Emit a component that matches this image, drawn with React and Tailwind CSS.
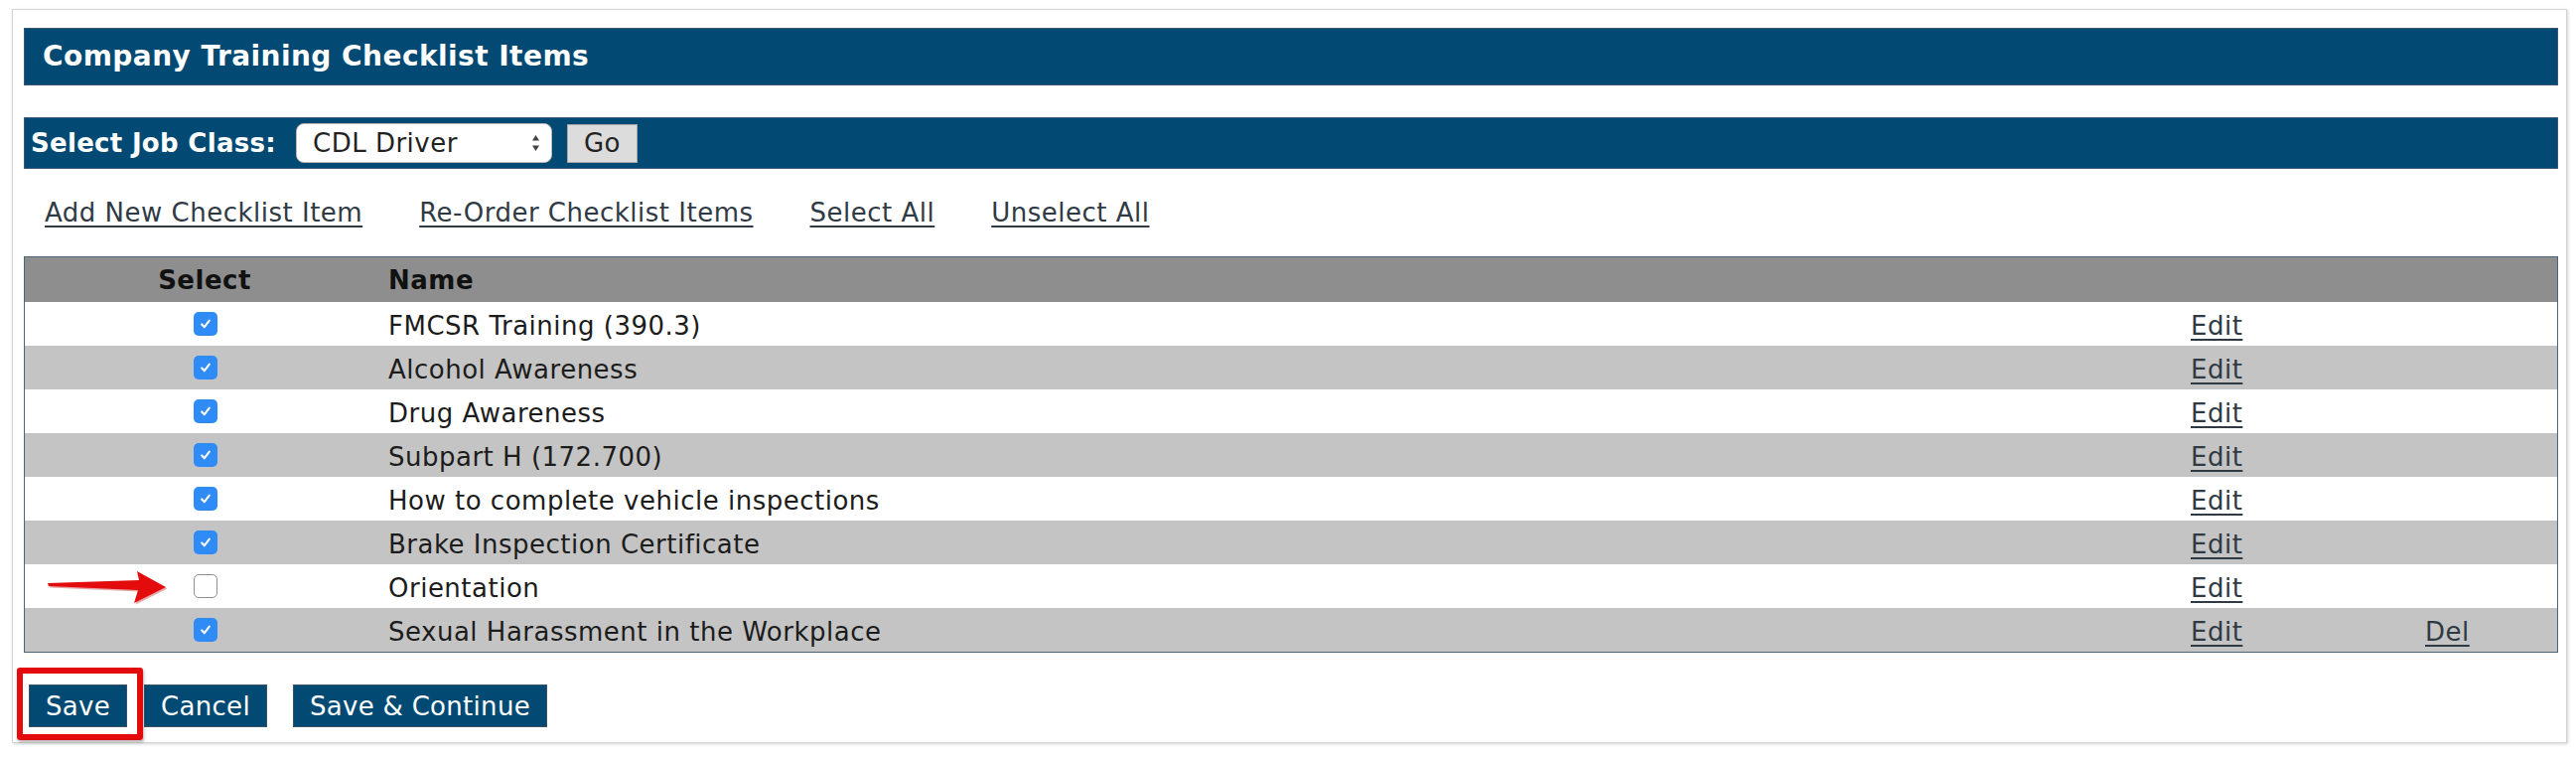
import React from "react";

const items = [
  { name: "FMCSR Training (390.3)", checked: true },
  { name: "Alcohol Awareness", checked: true },
  { name: "Drug Awareness", checked: true },
  { name: "Subpart H (172.700)", checked: true },
  { name: "How to complete vehicle inspections", checked: true },
  { name: "Brake Inspection Certificate", checked: true },
  { name: "Orientation", checked: false },
  { name: "Sexual Harassment in the Workplace", checked: true, del: true },
];

function Check({ checked }) {
  if (!checked) {
    return (
      <span className="block w-[24px] h-[24px] rounded-[5px] border border-[#8f8f8f] bg-white" />
    );
  }
  return (
    <span className="flex items-center justify-center w-[24px] h-[24px] rounded-[5px] bg-[#2f8bf6]">
      <svg width="14" height="14" viewBox="0 0 14 14">
        <path d="M3.2 7.4 L5.9 10.2 L10.8 3.6" fill="none" stroke="#fff" strokeWidth="2.1" strokeLinecap="round" strokeLinejoin="round" />
      </svg>
    </span>
  );
}

function NavLink({ children }) {
  return (
    <a className="text-[#2f3a45] underline decoration-[2px] underline-offset-[4px] cursor-pointer">{children}</a>
  );
}

function Button({ children }) {
  return (
    <button className="h-[43px] px-[16px] bg-[#024a73] border border-[#3c5367] text-white text-[26px] leading-none tracking-[0.3px]">
      {children}
    </button>
  );
}

export default function App() {
  return (
    <div className="relative w-[2594px] h-[762px] overflow-hidden bg-white text-[26px] tracking-[0.5px] text-[#1c1c1c] font-['DejaVu_Sans','Verdana','Liberation_Sans',sans-serif]">
      <div className="pt-[9px] pl-[12px]">
        <div className="w-[2573px] h-[739px] border border-[#d3d3d3] shadow-[1px_1px_3px_rgba(0,0,0,0.18)] pt-[18px] pl-[11px] pr-[8px]">
          {/* Page title */}
          <div className="h-[58px] flex items-center bg-[#024a73] border border-[#3a5876] pl-[18px]">
            <h1 className="text-white font-bold text-[28px] tracking-[0.45px] leading-none">
              Company Training Checklist Items
            </h1>
          </div>

          {/* Job class selector */}
          <div className="mt-[32px] h-[52px] flex items-center bg-[#024a73] border border-[#3a5876] pl-[6px]">
            <span className="text-white font-bold leading-none tracking-[0.3px]">Select Job Class:</span>
            <div className="ml-[20px] w-[258px] h-[40px] flex items-center justify-between bg-white border border-[#b9b9b9] rounded-[8px] pl-[16px] pr-[11px]">
              <span className="leading-none text-[#222]">CDL Driver</span>
              <svg width="9" height="18" viewBox="0 0 9 18">
                <path d="M4.5 1 L8 6.5 H1 Z" fill="#444" />
                <path d="M4.5 17 L8 11.5 H1 Z" fill="#444" />
              </svg>
            </div>
            <button className="ml-[15px] w-[71px] h-[39px] bg-[#dcdcdc] border border-[#a9a9a9] text-[#222] leading-none">
              Go
            </button>
          </div>

          {/* Actions */}
          <div className="h-[88px] flex items-center gap-[57px] pl-[21px]">
            <NavLink>Add New Checklist Item</NavLink>
            <NavLink>Re-Order Checklist Items</NavLink>
            <NavLink>Select All</NavLink>
            <NavLink>Unselect All</NavLink>
          </div>

          {/* Checklist table */}
          <div className="border border-[#4e6479]">
            <div className="grid grid-cols-[362px_1815px_236px_137px] h-[45px] bg-[#8e8e8e] font-bold text-[#111] leading-none">
              <div className="flex items-center justify-center">Select</div>
              <div className="flex items-center pl-[4px]">Name</div>
              <div />
              <div />
            </div>
            {items.map((it, i) => (
              <div
                key={it.name}
                className={`grid grid-cols-[362px_1815px_236px_137px] h-[44px] leading-none ${i % 2 === 0 ? "bg-white" : "bg-[#c4c4c4]"}`}
              >
                <div className="flex items-center justify-center pl-[1px]">
                  <Check checked={it.checked} />
                </div>
                <div className="flex items-center pl-[4px] pt-[3px]">{it.name}</div>
                <div className="flex items-center pl-[4px] pt-[3px]">
                  <a className="text-[#2f3a45] underline decoration-[2px] underline-offset-[4px] cursor-pointer">Edit</a>
                </div>
                <div className="flex items-center pl-[4px] pt-[3px]">
                  {it.del && (
                    <a className="text-[#2f3a45] underline decoration-[2px] underline-offset-[4px] cursor-pointer">Del</a>
                  )}
                </div>
              </div>
            ))}
          </div>

          {/* Form buttons */}
          <div className="mt-[32px] ml-[5px] flex items-center">
            <Button>Save</Button>
            <div className="ml-[17px]">
              <Button>Cancel</Button>
            </div>
            <div className="ml-[26px]">
              <Button>Save &amp; Continue</Button>
            </div>
          </div>
        </div>
      </div>

      {/* Callout arrow pointing at the unchecked item */}
      <svg className="absolute left-[40px] top-[568px]" width="135" height="45" viewBox="0 0 135 45">
        <polygon
          points="8,19 100,16 98,7 127,23 95,39 99,26 9,22"
          fill="#b30000"
          transform="translate(1.5,1.5)"
          opacity="0.35"
        />
        <polygon points="8,19 100,16 98,7 127,23 95,39 99,26 9,22" fill="#e30b0b" />
      </svg>

      {/* Callout frame around the Save button */}
      <div className="absolute left-[17px] top-[672px] w-[127px] h-[73px] border-[6px] border-[#e30b0b] rounded-[3px] shadow-[1px_2px_3px_rgba(0,0,0,0.3)]" />
    </div>
  );
}
